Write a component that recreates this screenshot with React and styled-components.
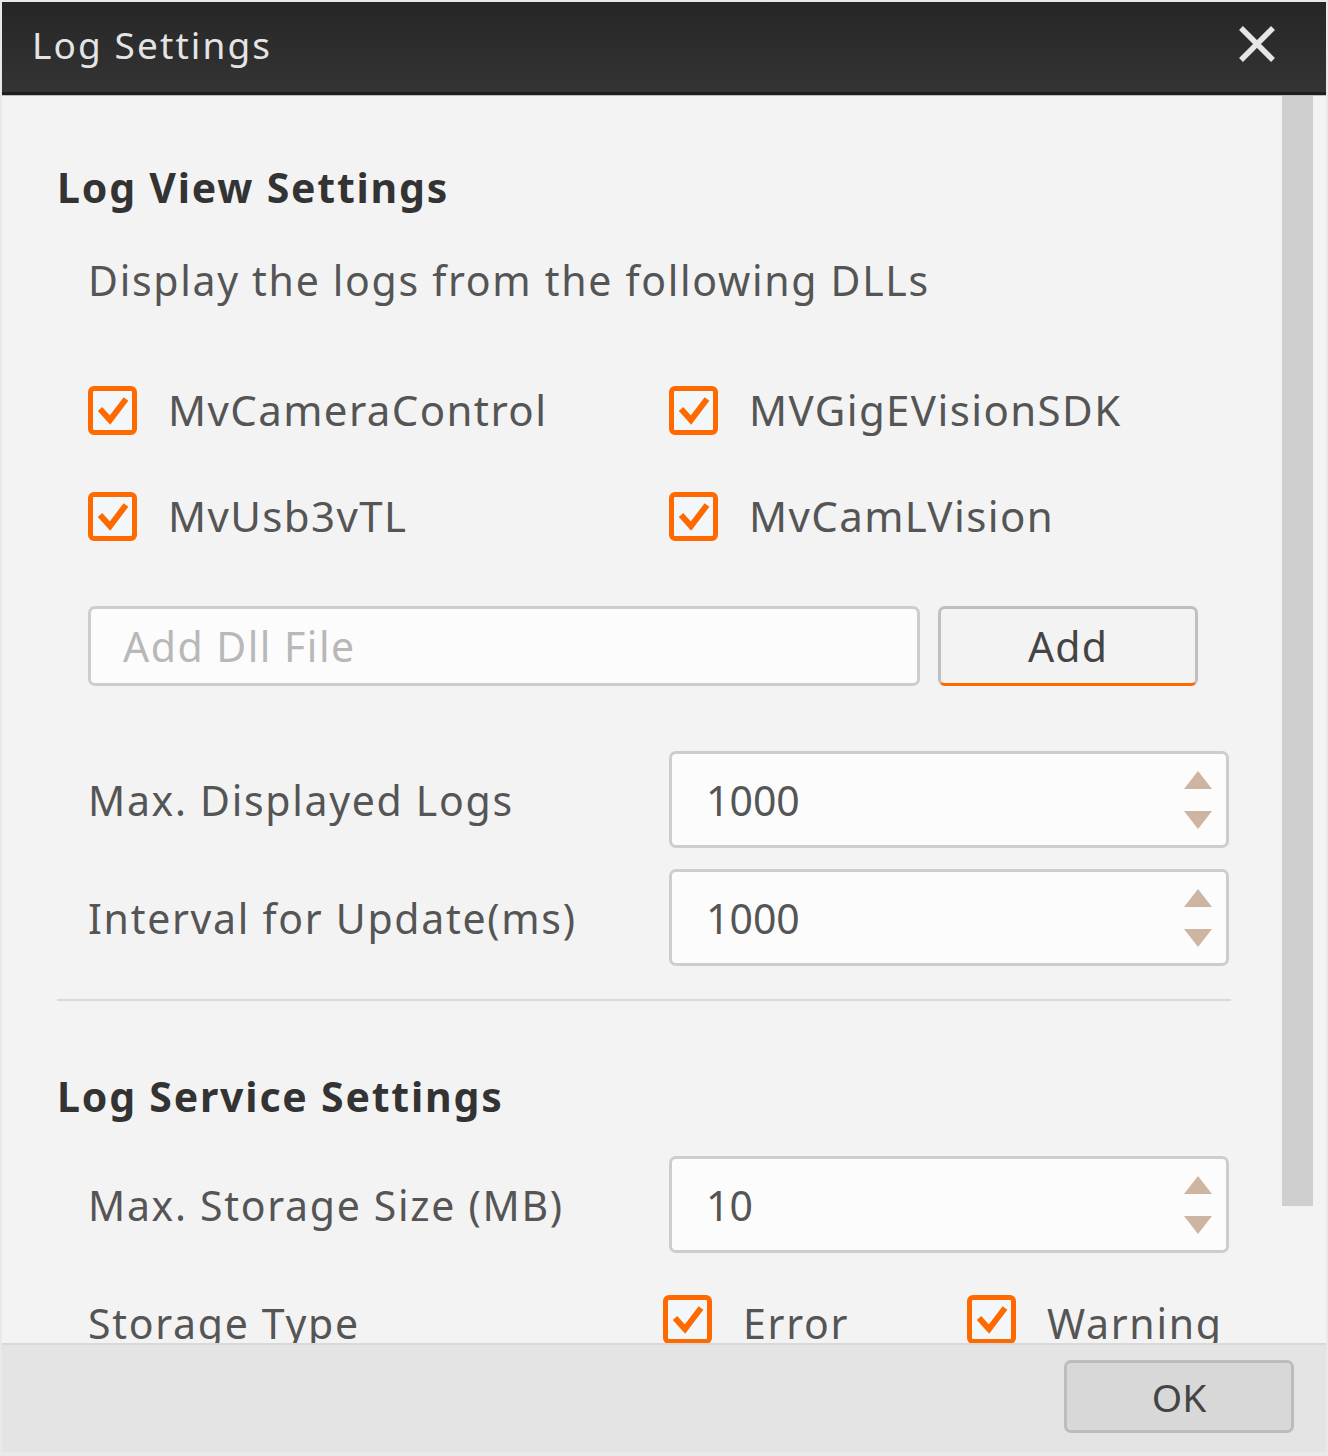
import React from "react";
import styled, { createGlobalStyle } from "styled-components";

const Global = createGlobalStyle`
  html, body { margin: 0; padding: 0; background: #f3f3f3; }
  * { box-sizing: border-box; }
`;

const FONT = `"Noto Sans", "Open Sans", sans-serif`;

const Window = styled.div`
  width: 1328px;
  height: 1456px;
  display: flex;
  flex-direction: column;
  border: 2px solid #e9e9e9;
  border-bottom-width: 4px;
  background: #f3f3f3;
  font-family: ${FONT};
  overflow: hidden;
`;

const TitleBar = styled.div`
  height: 93px;
  flex: none;
  display: flex;
  align-items: center;
  justify-content: space-between;
  padding: 0 50px 6px 30px;
  background: linear-gradient(#262626, #343434);
  border-bottom: 3px solid #1e1e1e;
  box-shadow: 0 1px 0 #bdbdbd;
`;

const Title = styled.div`
  color: #e4e4e4;
  font-size: 37px;
  letter-spacing: 2.1px;
`;

const Body = styled.div`
  flex: 1;
  display: flex;
  min-height: 0;
  overflow: hidden;
`;

const Content = styled.div`
  flex: 1;
  padding: 0 51px 0 55px;
  display: flex;
  flex-direction: column;
`;

const ScrollTrack = styled.div`
  width: 44px;
  flex: none;
  padding-top: 1px;
`;

const ScrollThumb = styled.div`
  width: 31px;
  height: 1110px;
  background: #cfcfcf;
`;

const Heading = styled.div`
  font-size: 41px;
  font-weight: 700;
  color: #333;
  line-height: 56px;
  margin-top: ${(p) => p.$mt}px;
  letter-spacing: 1.8px;
`;

const Text = styled.div`
  font-size: 41px;
  color: #555;
  line-height: 56px;
  white-space: nowrap;
  letter-spacing: 1.7px;
`;

const Description = styled(Text)`
  margin: 37px 0 0 31px;
`;

const CheckGrid = styled.div`
  display: grid;
  grid-template-columns: 581px 1fr;
  row-gap: 46px;
  margin: 72px 0 0 31px;
`;

const CheckItem = styled.label`
  display: flex;
  align-items: center;
  gap: 31px;
  height: 60px;
`;

const Box = styled.span`
  width: 49px;
  height: 49px;
  flex: none;
  border: 5px solid #ff6a00;
  border-radius: 6px;
  background: #f4f7f9;
  display: flex;
  align-items: center;
  justify-content: center;
`;

const CheckLabel = styled(Text)`
  font-size: 42px;
  letter-spacing: 1.4px;
`;

const AddRow = styled.div`
  display: flex;
  gap: 18px;
  margin: 60px 0 0 31px;
`;

const FileInput = styled.div`
  width: 832px;
  height: 80px;
  background: #fcfcfc;
  border: 3px solid #cdcdcd;
  border-radius: 7px;
  display: flex;
  align-items: center;
  padding-left: 32px;
  font-size: 41px;
  letter-spacing: 1.5px;
  color: #b8b8b8;
`;

const AddButton = styled.div`
  width: 260px;
  height: 80px;
  background: #f3f3f3;
  border: 3px solid #bfbfbf;
  border-bottom: 3px solid #ff6a00;
  border-radius: 7px;
  display: flex;
  align-items: center;
  justify-content: center;
  font-size: 41px;
  letter-spacing: 1.2px;
  color: #444;
`;

const FieldRow = styled.div`
  display: flex;
  align-items: center;
  margin: ${(p) => p.$mt}px 0 0 31px;
`;

const FieldLabel = styled(Text)`
  width: 581px;
  flex: none;
`;

const Spin = styled.div`
  width: 560px;
  height: 97px;
  background: #fcfcfc;
  border: 3px solid #cdcdcd;
  border-radius: 7px;
  display: flex;
  align-items: center;
  justify-content: space-between;
  padding: 0 14px 0 34px;
`;

const SpinValue = styled.span`
  font-size: 41px;
  color: #555;
`;

const Arrows = styled.div`
  display: flex;
  flex-direction: column;
  gap: 22px;
`;

const Divider = styled.div`
  height: 2px;
  flex: none;
  background: #d9d9d9;
  margin-top: 33px;
`;

const StorageRow = styled.div`
  display: grid;
  grid-template-columns: 575px 304px 1fr;
  align-items: center;
  margin: 34px 0 0 31px;
`;

const StorageText = styled(Text)`
  padding-top: 8px;
`;

const Footer = styled.div`
  height: 109px;
  flex: none;
  background: #e4e4e4;
  border-top: 2px solid #d9d9d9;
  display: flex;
  justify-content: flex-end;
  align-items: flex-start;
  padding: 15px 32px 0 0;
`;

const OkButton = styled.div`
  width: 230px;
  height: 73px;
  background: #d8d8d8;
  border: 3px solid #bcbcbc;
  border-radius: 7px;
  display: flex;
  align-items: center;
  justify-content: center;
  font-size: 39px;
  color: #444;
`;

const Check = ({ label, textPad }) => (
  <CheckItem>
    <Box>
      <svg width="32" height="30" viewBox="0 0 32 30">
        <path d="M3 14 L13 25 L29 4" fill="none" stroke="#ff6a00" strokeWidth="6" strokeLinejoin="miter" />
      </svg>
    </Box>
    {textPad ? <StorageText as="span">{label}</StorageText> : <CheckLabel>{label}</CheckLabel>}
  </CheckItem>
);

const SpinBox = ({ value }) => (
  <Spin>
    <SpinValue>{value}</SpinValue>
    <Arrows>
      <svg width="28" height="18" viewBox="0 0 28 18">
        <path d="M14 0 L28 18 L0 18 Z" fill="#cdb5a2" />
      </svg>
      <svg width="28" height="18" viewBox="0 0 28 18">
        <path d="M0 0 L28 0 L14 18 Z" fill="#cdb5a2" />
      </svg>
    </Arrows>
  </Spin>
);

export default function App() {
  return (
    <>
      <Global />
      <Window>
        <TitleBar>
          <Title>Log Settings</Title>
          <svg width="38" height="38" viewBox="0 0 38 38">
            <path d="M3 3 L35 35 M35 3 L3 35" stroke="#e6e6e6" strokeWidth="5.5" />
          </svg>
        </TitleBar>
        <Body>
          <Content>
            <Heading $mt={64}>Log View Settings</Heading>
            <Description>Display the logs from the following DLLs</Description>
            <CheckGrid>
              <Check label="MvCameraControl" />
              <Check label="MVGigEVisionSDK" />
              <Check label="MvUsb3vTL" />
              <Check label="MvCamLVision" />
            </CheckGrid>
            <AddRow>
              <FileInput>Add Dll File</FileInput>
              <AddButton>Add</AddButton>
            </AddRow>
            <FieldRow $mt={65}>
              <FieldLabel>Max. Displayed Logs</FieldLabel>
              <SpinBox value="1000" />
            </FieldRow>
            <FieldRow $mt={21}>
              <FieldLabel>Interval for Update(ms)</FieldLabel>
              <SpinBox value="1000" />
            </FieldRow>
            <Divider />
            <Heading $mt={67}>Log Service Settings</Heading>
            <FieldRow $mt={32}>
              <FieldLabel>Max. Storage Size (MB)</FieldLabel>
              <SpinBox value="10" />
            </FieldRow>
            <StorageRow>
              <StorageText>Storage Type</StorageText>
              <Check label="Error" textPad />
              <Check label="Warning" textPad />
            </StorageRow>
          </Content>
          <ScrollTrack>
            <ScrollThumb />
          </ScrollTrack>
        </Body>
        <Footer>
          <OkButton>OK</OkButton>
        </Footer>
      </Window>
    </>
  );
}
